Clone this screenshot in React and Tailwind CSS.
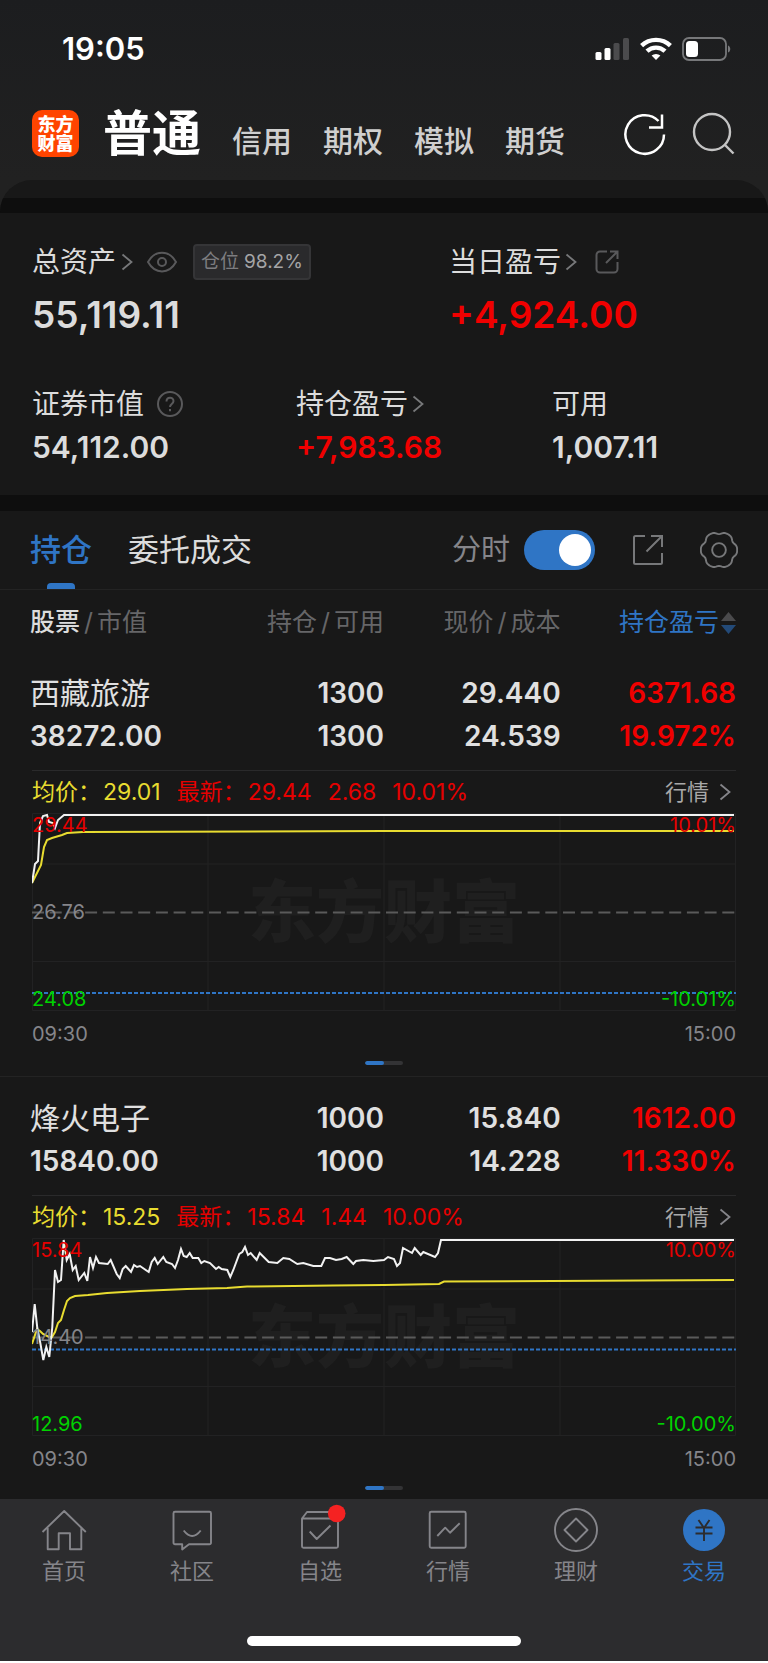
import { useState } from "react";

const TABS = ["信用", "期权", "模拟", "期货"];

const STOCKS = [
  {
    name: "西藏旅游",
    value: "38272.00",
    held: "1300",
    usable: "1300",
    price: "29.440",
    cost: "24.539",
    profit: "6371.68",
    rate: "19.972%",
    avg: "29.01",
    last: "29.44",
    change: "2.68",
    pct: "10.01%",
    high: "29.44",
    mid: "26.76",
    low: "24.08",
    costY: 180,
    priceLine: "0,70 3,51 6,48 8,10 11,3 15,2 17,9 21,10 23,15 26,7 32,2 702,2",
    avgLine: "0,70 9,52 12,34 15,27 20,25 30,22 35,20 51,19 352,18 702,18",
  },
  {
    name: "烽火电子",
    value: "15840.00",
    held: "1000",
    usable: "1000",
    price: "15.840",
    cost: "14.228",
    profit: "1612.00",
    rate: "11.330%",
    avg: "15.25",
    last: "15.84",
    change: "1.44",
    pct: "10.00%",
    high: "15.84",
    mid: "14.40",
    low: "12.96",
    costY: 111.5,
    priceLine:
      "0,94 2.7,66 5.3,90 8.3,105 11.3,122 14.3,109 17.3,119 20.3,89 23,32 26,44 29,42 31.7,2 34.7,22 37.7,16 40.7,32 43.7,28 46.7,42 52.3,35 55.3,43 58,19 61,30 64,19 67,25 75.7,26 78.7,22 81.7,29 84.7,36 87.7,40 90.7,31 93.7,28 99,34 102,27 105,29 108,28 116.7,34 119.7,24 122.7,20 125.7,26 131.3,19 134.3,24 140,26 143,30 146,22 149,11 151.7,18 154.7,19 157.7,15 160.7,20 166.3,20 169.3,25 172.3,23 178,25 184,31 186.7,29 189.7,31 195.3,32 198.3,39 201.3,32 207.3,16 210.3,14 213,9 216,17 218.7,15 224.7,22 227.7,15 236.7,24 245.3,25 251.3,20 257.3,21 265.3,26 271.3,25 281.3,28 289.3,28 293,20 298,20 304,22 309.7,21 314.7,19 321.3,26 324,23 331.3,22 341.3,23 352,22 356,19 362,21 365,28 368,25 371,10 380,15 382.7,10 388.7,17 391.3,14 403,19 406,15 409,2 702,2",
    avgLine:
      "0,106 5,91 8,93 11,96 17,99 20,99 23,94 26,85 29,82 32,72 35,63 38,60 43,58 56,57 75,55 108,53 155,51 195,50 215,48.5 301,47.5 352,47 407,46 412,43.5 702,42",
  },
];

// six flattened lobes with narrow dips between them
const GEAR = Array.from({ length: 72 }, (_, i) => {
  const a = (i * Math.PI) / 36;
  const r = 16.4 + 1.1 * Math.cos(6 * a) - 0.3 * Math.cos(12 * a);
  return `${(18 + r * Math.cos(a)).toFixed(2)},${(18 + r * Math.sin(a)).toFixed(2)}`;
}).join(" ");

function Chevron({ className }) {
  return (
    <svg viewBox="0 0 12 18" className={`h-[18px] w-3 shrink-0 ${className}`} fill="none" stroke="currentColor" strokeWidth="1.8">
      <path d="M1.5 1.5 10.5 9l-9 7.5" />
    </svg>
  );
}

function StatusBar() {
  return (
    <div className="flex h-[98px] items-center justify-between pl-[62px] pr-9">
      <span className="text-[31px] font-semibold leading-9 text-white">19:05</span>
      <div className="flex items-center gap-[10px]">
        <svg viewBox="0 0 35 24" className="h-6 w-[35px]">
          <rect x="0.5" y="15" width="6" height="8" rx="1.5" fill="#fff" />
          <rect x="9.5" y="11" width="6" height="12" rx="1.5" fill="#fff" />
          <rect x="18.5" y="6" width="6" height="17" rx="1.5" fill="#4b4b4d" />
          <rect x="28" y="1" width="6" height="22" rx="1.5" fill="#4b4b4d" />
        </svg>
        <svg viewBox="0 0 32 24" className="h-6 w-8" fill="none" stroke="#fff" strokeWidth="4.4">
          <path d="M1.6 8.6a21 21 0 0 1 28.8 0" />
          <path d="M7 14.2a13 13 0 0 1 18 0" />
          <path d="M11.6 18.6a6.6 6.6 0 0 1 8.8 0L16 23z" fill="#fff" stroke="none" />
        </svg>
        <svg viewBox="0 0 50 24" className="h-6 w-[50px]">
          <rect x="1" y="1" width="43" height="22" rx="6" fill="none" stroke="#77787a" strokeWidth="1.8" />
          <rect x="4" y="4" width="12" height="16" rx="3.5" fill="#fff" />
          <path d="M46 8.5c3 1 3 6 0 7z" fill="#77787a" />
        </svg>
      </div>
    </div>
  );
}

function Header() {
  return (
    <header className="flex h-[82px] items-start justify-between pl-8 pr-[33px]">
      <div className="flex items-start">
        <div className="mt-3 flex size-[47px] flex-col items-center justify-center rounded-[10px] bg-[#ff4400] text-[18px] font-black leading-[19px] text-white">
          <span>东方</span>
          <span>财富</span>
        </div>
        <nav className="ml-6 flex items-end gap-[31px]">
          <button className="text-[49px] font-bold leading-[72px] text-white">普通</button>
          {TABS.map((t) => (
            <button key={t} className="pb-2 text-[30px] font-medium leading-[42px] text-[#cfcfcf]">
              {t}
            </button>
          ))}
        </nav>
      </div>
      <div className="mt-[14px] flex gap-6">
        <button aria-label="刷新">
          <svg viewBox="0 0 44 44" className="size-11" fill="none" stroke="#fff" strokeWidth="2.5">
            <path d="M41 22.5A19.3 19.3 0 1 1 35.5 9" />
            <path d="M39 2.5v13H26" />
          </svg>
        </button>
        <button aria-label="搜索">
          <svg viewBox="0 0 44 44" className="size-11" fill="none" stroke="#c4c4c4" strokeWidth="2.4">
            <circle cx="21" cy="20" r="18" />
            <path d="m33.5 32.5 9 9" />
          </svg>
        </button>
      </div>
    </header>
  );
}

function Assets() {
  return (
    <section className="px-8 pb-[30px] pt-[31px] text-[#dcdcdc]">
      <div className="grid grid-cols-[417fr_287fr]">
        <div>
          <div className="flex h-9 items-center text-[28px]">
            <span>总资产</span>
            <Chevron className="ml-[5px] text-[#77787a]" />
            <button aria-label="隐藏金额" className="ml-[14px]">
              <svg viewBox="0 0 30 22" className="h-[22px] w-[30px]" fill="none" stroke="#59595b" strokeWidth="2">
                <path d="M1 11C8-1.5 22-1.5 29 11 22 23.5 8 23.5 1 11z" />
                <circle cx="15" cy="11" r="4" />
              </svg>
            </button>
            <span className="ml-4 flex h-9 items-center whitespace-nowrap rounded border-2 border-[#353537] bg-[#2a2a2c] px-[6px] text-[19px] text-[#a5a5a7]">
              <span className="mr-[5px] text-[#7d7d80]">仓位</span>98.2%
            </span>
          </div>
          <p className="mt-3 text-[37px] font-semibold leading-[46px]">55,119.11</p>
        </div>
        <div>
          <div className="flex h-9 items-center text-[28px]">
            <span>当日盈亏</span>
            <Chevron className="ml-1 text-[#77787a]" />
            <a href="#share" aria-label="分享" className="ml-[18px]">
              <svg viewBox="0 0 24 24" className="size-6" fill="none" stroke="#59595b" strokeWidth="2">
                <path d="M12 1.5H5A3.5 3.5 0 0 0 1.5 5v14A3.5 3.5 0 0 0 5 22.5h14a3.5 3.5 0 0 0 3.5-3.5v-7M15 1.5h7.5V9M22.5 1.5 11 13" />
              </svg>
            </a>
          </div>
          <p className="mt-3 text-[37px] font-semibold leading-[46px] text-[#f00000]">+4,924.00</p>
        </div>
      </div>
      <div className="mt-12 grid grid-cols-[264fr_256fr_184fr]">
        <div>
          <div className="flex h-9 items-center text-[28px]">
            <span>证券市值</span>
            <svg viewBox="0 0 28 28" className="ml-3 size-7" fill="none" stroke="#59595b" strokeWidth="2">
              <circle cx="14" cy="14" r="12" />
              <path d="M10.5 11.5c0-5 7-5 7-.5 0 3-3.5 3-3.5 6M14 19v2.2" />
            </svg>
          </div>
          <p className="mt-[7px] text-[30px] font-semibold leading-9">54,112.00</p>
        </div>
        <div>
          <div className="flex h-9 items-center text-[28px]">
            <span>持仓盈亏</span>
            <Chevron className="ml-1 text-[#77787a]" />
          </div>
          <p className="mt-[7px] text-[30px] font-semibold leading-9 text-[#f00000]">+7,983.68</p>
        </div>
        <div>
          <div className="flex h-9 items-center text-[28px]">可用</div>
          <p className="mt-[7px] text-[30px] font-semibold leading-9">1,007.11</p>
        </div>
      </div>
    </section>
  );
}

function Toolbar({ showChart, onToggle }) {
  return (
    <div className="flex h-[79px] justify-between border-b border-[#232323] px-[30px]">
      <div className="flex gap-9 text-[31px]">
        <button className="relative font-medium text-[#2f75c5]">
          持仓
          <span className="absolute bottom-0 left-1/2 h-[6px] w-7 -translate-x-1/2 rounded-t bg-[#2f75c5]" />
        </button>
        <button className="text-[#dcdcdc]">委托成交</button>
      </div>
      <div className="flex items-center">
        <label htmlFor="chart-switch" className="text-[29px] text-[#85858a]">
          分时
        </label>
        <input
          id="chart-switch"
          type="checkbox"
          checked={showChart}
          onChange={(e) => onToggle(e.target.checked)}
          className="ml-[14px] flex h-10 w-[71px] appearance-none items-center rounded-full bg-[#48484a] p-1 before:block before:size-8 before:rounded-full before:bg-white checked:justify-end checked:bg-[#2f75c5]"
        />
        <a href="#export" aria-label="导出" className="ml-[37px]">
          <svg viewBox="0 0 32 32" className="size-8" fill="none" stroke="#77787a" strokeWidth="2">
            <path d="M13 2H3.5A1.5 1.5 0 0 0 2 3.5v25A1.5 1.5 0 0 0 3.5 30h25a1.5 1.5 0 0 0 1.5-1.5V19M19 2h11v11M30 2 14.5 17.5" />
          </svg>
        </a>
        <button aria-label="设置" className="ml-9">
          <svg viewBox="0 0 36 36" className="size-[38px]" fill="none" stroke="#77787a" strokeWidth="1.8" strokeLinejoin="round">
            <polygon points={GEAR} />
            <circle cx="18" cy="18" r="6.5" />
          </svg>
        </button>
      </div>
    </div>
  );
}

function Chart({ stock }) {
  return (
    <>
      <div className="relative h-[198px]">
        <div className="flex h-full items-center justify-center text-[68px] font-black text-[#1f1f1f]">东方财富</div>
        <svg viewBox="0 0 704 198" preserveAspectRatio="none" className="absolute inset-0 h-full w-full" fill="none">
          <path d="M.5.5h703v197H.5zM0 51h704M0 148.5h704M176 0v198M352 0v198M528 0v198" stroke="#222223" />
          <path d="M0 99.5h704" stroke="#5a5a5a" strokeWidth="2" strokeDasharray="12 5.7" />
          <path d={`M0 ${stock.costY}h704`} stroke="#2f75c5" strokeWidth="2" strokeDasharray="4 2" />
          <polyline points={stock.avgLine} stroke="#e8dc30" strokeWidth="2" />
          <polyline points={stock.priceLine} stroke="#f2f2f2" strokeWidth="2" />
        </svg>
        <div className="absolute inset-0 flex justify-between text-[20px] leading-6">
          <div className="flex flex-col justify-between">
            <span className="text-[#e60000]">{stock.high}</span>
            <span className="text-[#85858a]">{stock.mid}</span>
            <span className="text-[#00d200]">{stock.low}</span>
          </div>
          <div className="flex flex-col justify-between text-right">
            <span className="text-[#e60000]">{stock.pct}</span>
            <span className="text-[#00d200]">-{stock.pct}</span>
          </div>
        </div>
      </div>
      <div className="flex h-[46px] items-center justify-between text-[20px] text-[#85858a]">
        <span>09:30</span>
        <span>15:00</span>
      </div>
    </>
  );
}

function StockRows({ stock, last, showChart }) {
  return (
    <tbody className="text-[28px] leading-[43px] text-[#e0e0e0]">
      <tr className="text-right font-semibold">
        <td className="pb-3 pl-[30px] pt-5 text-left">
          <div className="text-[30px] font-normal">{stock.name}</div>
          <div>{stock.value}</div>
        </td>
        <td className="pb-3 pt-5">
          <div>{stock.held}</div>
          <div>{stock.usable}</div>
        </td>
        <td className="pb-3 pt-5">
          <div>{stock.price}</div>
          <div>{stock.cost}</div>
        </td>
        <td className="pb-3 pr-8 pt-5 text-[#f00000]">
          <div>{stock.profit}</div>
          <div>{stock.rate}</div>
        </td>
      </tr>
      {showChart && (
        <tr>
          <td colSpan={4} className={last ? "px-8 pb-[9px]" : "border-b border-[#232323] px-8 pb-[11px]"}>
            <div className="flex h-[43px] items-center justify-between border-t border-[#2a2a2b] text-[23px]">
              <div className="flex gap-4 text-[#e60000]">
                <span className="flex gap-[2px] text-[#e8dc30]">
                  <span>均价：</span>
                  <span>{stock.avg}</span>
                </span>
                <span className="flex gap-[2px]">
                  <span>最新：</span>
                  <span>{stock.last}</span>
                </span>
                <span>{stock.change}</span>
                <span>{stock.pct}</span>
              </div>
              <a href="#quote" className="flex items-center gap-[10px] pr-[5px] text-[22px] text-[#a8a8a8]">
                行情
                <Chevron className="text-[#85858a]" />
              </a>
            </div>
            <Chart stock={stock} />
            <div className="mx-auto mt-1 h-1 w-[38px] overflow-hidden rounded-full bg-[#333335]">
              <div className="h-full w-1/2 rounded-full bg-[#2f75c5]" />
            </div>
          </td>
        </tr>
      )}
    </tbody>
  );
}

function Holdings({ showChart }) {
  return (
    <table className="w-full table-fixed border-separate border-spacing-0">
      <colgroup>
        <col className="w-[27%]" />
        <col className="w-[23%]" />
        <col className="w-[23%]" />
        <col className="w-[27%]" />
      </colgroup>
      <thead className="text-right text-[25px] text-[#666668]">
        <tr className="h-[62px]">
          <th className="p-0 pl-[30px] pt-1 text-left font-normal">
            <span className="font-medium text-[#dcdcdc]">股票</span>
            <span className="mx-1">/</span>市值
          </th>
          <th className="p-0 pt-1 font-normal">
            持仓<span className="mx-1">/</span>可用
          </th>
          <th className="p-0 pt-1 font-normal">
            现价<span className="mx-1">/</span>成本
          </th>
          <th className="p-0 pr-8 pt-1 font-normal">
            <button className="inline-flex items-center gap-[2px] text-[#2f75c5]">
              持仓盈亏
              <svg viewBox="0 0 15 24" className="h-6 w-[15px]">
                <path d="M7.5 1 15 10H0z" fill="#4a4a4c" />
                <path d="M7.5 23 15 14H0z" fill="#234a78" />
              </svg>
            </button>
          </th>
        </tr>
      </thead>
      {STOCKS.map((s, i) => (
        <StockRows key={s.name} stock={s} last={i === STOCKS.length - 1} showChart={showChart} />
      ))}
    </table>
  );
}

const NAV = [
  {
    label: "首页",
    icon: <path d="M.5 24 22.2 3 43.800 24M5.7 20v21.3h11v-16H28v16h11.3V20" />,
  },
  {
    label: "社区",
    icon: <path d="M5 3.7h34.500a1.500 1.500 0 0 1 1.500 1.500v29.600a1.500 1.500 0 0 1-1.500 1.500H19L12.200 41.500v-5.200H5a1.500 1.500 0 0 1-1.500-1.500V5.200A1.500 1.500 0 0 1 5 3.700zM13.700 22.500q8.500 11 17 0" />,
  },
  {
    label: "自选",
    icon: (
      <>
        <path d="M4 10.5h36v27.700a1.500 1.500 0 0 1-1.500 1.500h-33A1.500 1.500 0 0 1 4 38.200zL9 4h26l5 6.500M11.700 23.500l7 7.500 13.800-13.500" />
        <circle cx="38.7" cy="5.5" r="8.8" fill="#f52222" stroke="none" />
      </>
    ),
  },
  {
    label: "行情",
    icon: (
      <>
        <rect x="3.7" y="3.7" width="36" height="36" rx="1.5" />
        <path d="m11.3 28 7.900-8.300 4.800 5 9.700-9.500" />
      </>
    ),
  },
  {
    label: "理财",
    icon: (
      <>
        <circle cx="22" cy="22" r="21" />
        <path d="M22 10.5 33.500 22 22 33.500 10.500 22z" />
      </>
    ),
  },
  {
    label: "交易",
    active: true,
    icon: (
      <>
        <circle cx="22" cy="22" r="21" fill="#2f75c5" stroke="none" />
        <path d="m16.5 12 5.500 8 5.500-8M22 20v13M13.500 19.500h17M13.500 25.500h17" stroke="#2c2c2e" />
      </>
    ),
  },
];

function BottomNav() {
  return (
    <footer className="bg-[#2c2c2e] pb-[15px] pt-[9px]">
      <nav className="grid grid-cols-6">
        {NAV.map((n) => (
          <a key={n.label} href={`#${n.label}`} className={`flex flex-col items-center ${n.active ? "text-[#2f75c5]" : "text-[#85858a]"}`}>
            <svg viewBox="0 0 44 44" className="size-11 overflow-visible" fill="none" stroke="currentColor" strokeWidth="1.9" strokeLinejoin="round">
              {n.icon}
            </svg>
            <span className="mt-[5px] text-[22px] leading-7">{n.label}</span>
          </a>
        ))}
      </nav>
      <div className="mx-auto mt-[51px] h-[10px] w-[274px] rounded-full bg-white" />
    </footer>
  );
}

export default function App() {
  const [showChart, setShowChart] = useState(true);

  return (
    <div className="bg-gradient-to-b from-[#1c1d1f] to-[#212121] to-[180px] font-['Inter','Noto_Sans_CJK_SC',sans-serif]">
      <StatusBar />
      <Header />
      <main className="overflow-hidden rounded-t-[32px] bg-[#181818]">
        <div className="mt-[18px] h-[15px] bg-[#0e0e0e]" />
        <Assets />
        <div className="h-4 bg-[#0e0e0e]" />
        <Toolbar showChart={showChart} onToggle={setShowChart} />
        <Holdings showChart={showChart} />
      </main>
      <BottomNav />
    </div>
  );
}
